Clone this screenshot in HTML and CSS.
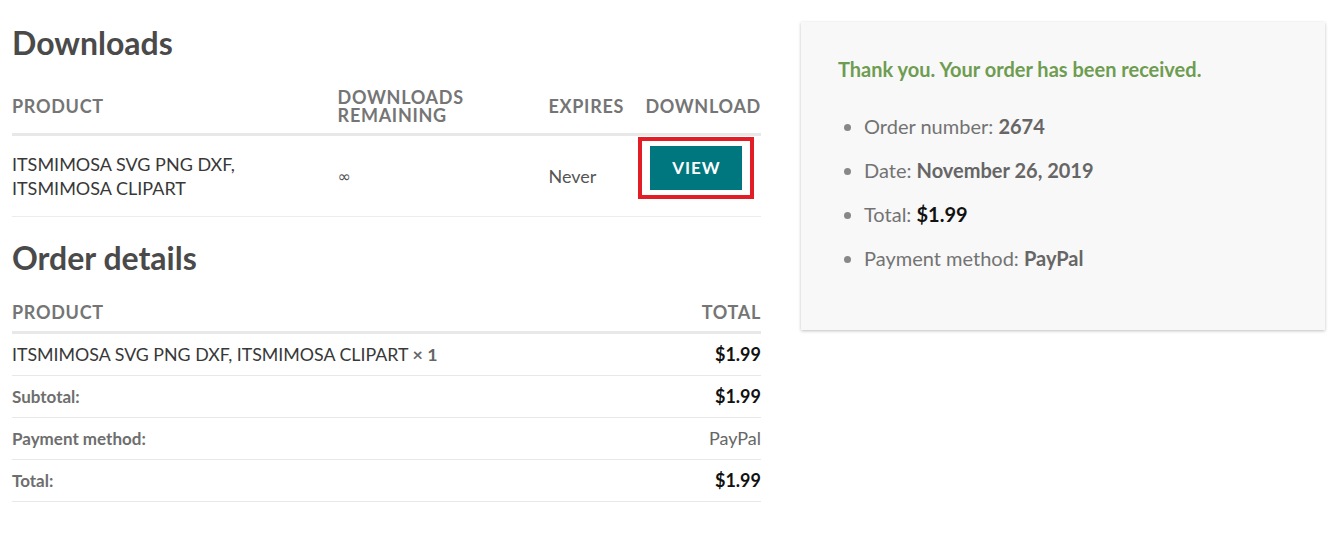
FILE: index.html
```html
<!DOCTYPE html>
<html>
<head>
<meta charset="utf-8">
<link rel="stylesheet" href="styles.css">
</head>
<body>
<div class="page">
  <div class="main">
    <h2 class="title">Downloads</h2>
    <table class="tbl dl">
      <thead>
        <tr>
          <th class="c-prod">Product</th>
          <th class="c-rem">Downloads remaining</th>
          <th class="c-exp">Expires</th>
          <th class="c-dl">Download</th>
        </tr>
      </thead>
      <tbody>
        <tr>
          <td class="c-prod">ITSMIMOSA SVG PNG DXF, ITSMIMOSA CLIPART</td>
          <td class="c-rem"><span class="inf">∞</span></td>
          <td class="c-exp">Never</td>
          <td class="c-dl"><span class="mark"><a class="btn" href="#">View</a></span></td>
        </tr>
      </tbody>
    </table>

    <h2 class="title title2">Order details</h2>
    <table class="tbl od">
      <thead>
        <tr>
          <th class="left">Product</th>
          <th class="right">Total</th>
        </tr>
      </thead>
      <tbody>
        <tr>
          <td class="left item">ITSMIMOSA SVG PNG DXF, ITSMIMOSA CLIPART <strong class="qty">× 1</strong></td>
          <td class="right amt">$1.99</td>
        </tr>
      </tbody>
      <tfoot>
        <tr>
          <th class="left lbl">Subtotal:</th>
          <td class="right amt">$1.99</td>
        </tr>
        <tr>
          <th class="left lbl">Payment method:</th>
          <td class="right plain">PayPal</td>
        </tr>
        <tr>
          <th class="left lbl">Total:</th>
          <td class="right amt">$1.99</td>
        </tr>
      </tfoot>
    </table>
  </div>

  <aside class="side">
    <p class="thanks">Thank you. Your order has been received.</p>
    <ul class="overview">
      <li>Order number: <strong>2674</strong></li>
      <li>Date: <strong>November 26, 2019</strong></li>
      <li>Total: <strong class="black">$1.99</strong></li>
      <li>Payment method: <strong>PayPal</strong></li>
    </ul>
  </aside>
</div>
</body>
</html>
```

FILE: styles.css
```css
* { box-sizing: border-box; }
html, body { margin: 0; padding: 0; background: #fff; }
body {
  font-family: Lato, "Open Sans", Arial, sans-serif;
  color: #333;
  font-size: 18px;
}
.page {
  display: flex;
  align-items: flex-start;
  padding: 23px 13px 0 12px;
  gap: 40px;
}
.main { width: 749px; flex: none; }
.title {
  margin: 0 0 16px;
  font-size: 32px;
  line-height: 40px;
  font-weight: 700;
  color: #4a4a4a;
}
.title2 { margin-top: 21px; margin-bottom: 16px; }
.tbl {
  width: 100%;
  border-collapse: separate;
  border-spacing: 0;
  font-size: 18px;
}
.tbl thead th {
  font-size: 18px;
  font-weight: 700;
  text-transform: uppercase;
  letter-spacing: 0.7px;
  color: #757575;
  line-height: 18px;
  text-align: left;
  vertical-align: middle;
  border-bottom: 3px solid #e8e8e8;
  padding: 9px 0;
}
.od thead th { padding-bottom: 10px; }
.dl td {
  padding: 16px 0;
  border-bottom: 1px solid #ececec;
  vertical-align: middle;
  line-height: 24px;
  color: #383838;
}
.inf {
  font-family: "DejaVu Sans", sans-serif;
  font-size: 16px;
  font-weight: 400;
  color: #555;
}
.dl .c-prod { width: 326px; padding-right: 30px; }
.dl .c-rem { width: 211px; }
.dl .c-exp { width: 97px; }
.dl td.c-exp { color: #555; }
.dl .c-dl { width: 115px; }
.dl td.c-dl { vertical-align: top; padding-top: 1px; padding-bottom: 0; }
.mark {
  display: inline-block;
  border: 4px solid #e21d25;
  padding: 5px 8px;
  margin-left: -7px;
}
.btn {
  display: block;
  width: 92px;
  height: 44px;
  line-height: 44px;
  background: #00767f;
  color: #fff;
  text-align: center;
  text-decoration: none;
  font-weight: 700;
  font-size: 17px;
  letter-spacing: 1px;
  text-transform: uppercase;
}
.od thead th.right { text-align: right; }
.od td, .od tfoot th {
  padding: 9px 0;
  line-height: 23px;
  border-bottom: 1px solid #e8e8e8;
  vertical-align: middle;
  text-align: left;
}
.od td.right { text-align: right; }
.item { color: #383838; font-size: 17.8px; }
.qty { color: #666; font-weight: 700; }
.od tfoot th.lbl { font-size: 17px; font-weight: 700; color: #6e6e6e; }
.amt { font-weight: 700; color: #111; }
.plain { color: #666; }
.side {
  width: 524px;
  flex: none;
  margin-top: -1px;
  background: #f8f8f8;
  box-shadow: 0 1px 3px rgba(0,0,0,0.25);
  padding: 34px 37px 40px;
  min-height: 308px;
}
.thanks {
  margin: 0;
  font-size: 20px;
  line-height: 26px;
  font-weight: 700;
  color: #6e9c50;
}
.overview {
  margin: 32px 0 0;
  padding: 0 0 0 26px;
  color: #737373;
  font-size: 20px;
}
.overview li {
  line-height: 24px;
  margin-bottom: 20px;
}
.overview li::marker { color: #888; }
.overview strong { color: #666; font-weight: 700; }
.overview strong.black { color: #111; }
```
